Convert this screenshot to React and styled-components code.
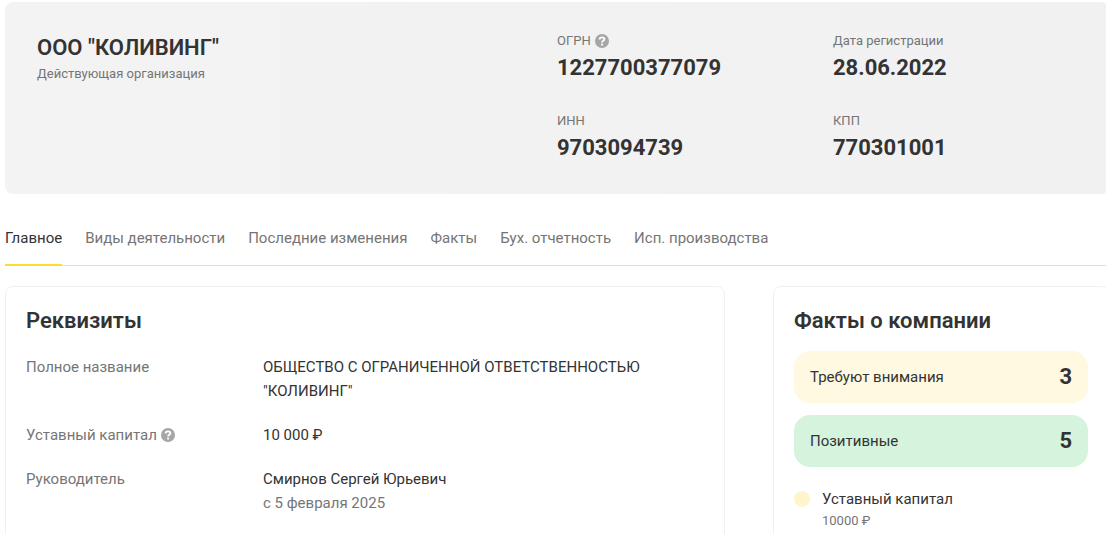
import React from "react";
import styled, { createGlobalStyle } from "styled-components";

const GlobalStyle = createGlobalStyle`
  * {
    box-sizing: border-box;
  }
  body {
    margin: 0;
    background: #fff;
    color: #333;
    font-family: Roboto, "Liberation Sans", Arial, sans-serif;
    font-size: 15px;
    line-height: 24px;
    overflow-x: hidden;
  }
  h1, h2, p, dl, dd, ul {
    margin: 0;
    padding: 0;
  }
`;

const Page = styled.main`
  margin: 0 -3px 0 5px;
  padding-top: 2px;
`;

const Header = styled.header`
  display: grid;
  grid-template-columns: 2fr 1fr 1fr;
  background: linear-gradient(90deg, #f3f3f3, #f1f1f1);
  border-radius: 8px;
  padding: 28px 0 32px;
`;

const Company = styled.div`
  padding: 2px 0 0 32px;
`;

const CompanyName = styled.h1`
  font-size: 22px;
  line-height: 32px;
  font-weight: 600;
`;

const Status = styled.p`
  color: #757575;
  font-size: 13px;
  line-height: 20px;
`;

const Codes = styled.dl`
  display: flex;
  flex-direction: column;
  gap: 28px;
`;

const CodeLabel = styled.dt`
  display: flex;
  align-items: center;
  gap: 4px;
  color: #757575;
  font-size: 13px;
  line-height: 22px;
  padding-bottom: 2px;
`;

const CodeValue = styled.dd`
  font-size: 22px;
  line-height: 28px;
  font-weight: 700;
`;

const Tabs = styled.nav`
  display: flex;
  gap: 23px;
  padding-top: 32px;
  border-bottom: 1px solid #dddfe0;
`;

const Tab = styled.a`
  height: 40px;
  margin-bottom: -1px;
  color: ${(props) => (props.$active ? "#333" : "#757575")};
  border-bottom: 2px solid ${(props) => (props.$active ? "#ffdd2d" : "transparent")};
  text-decoration: none;
  white-space: nowrap;
`;

const Content = styled.div`
  display: grid;
  grid-template-columns: minmax(0, 1fr) 336px;
  gap: 48px;
  padding-top: 20px;
`;

const Card = styled.section`
  border: 1px solid #eff0f5;
  border-radius: 8px;
  padding: 18px 20px;
`;

const CardTitle = styled.h2`
  font-size: 22px;
  line-height: 32px;
  font-weight: 600;
`;

const Details = styled.dl`
  display: grid;
  grid-template-columns: 237px minmax(0, 400px);
  row-gap: 20px;
  padding-top: 18px;
`;

const DetailName = styled.dt`
  display: flex;
  align-items: center;
  align-self: start;
  gap: 4px;
  color: #757575;
`;

const Muted = styled.p`
  color: #757575;
`;

const Hint = styled.button`
  display: flex;
  padding: 0;
  border: 0;
  background: none;
  cursor: pointer;
`;

const Pills = styled.div`
  display: flex;
  flex-direction: column;
  gap: 12px;
  padding-top: 14px;
`;

const Pill = styled.button`
  display: flex;
  align-items: center;
  justify-content: space-between;
  height: 52px;
  padding: 0 16px;
  border: 0;
  border-radius: 16px;
  background: ${(props) => (props.$good ? "#d6f3de" : "#fff9e1")};
  color: #333;
  font: inherit;
  cursor: pointer;
`;

const Count = styled.span`
  font-size: 22px;
  font-weight: 700;
`;

const Facts = styled.ul`
  list-style: none;
  padding-top: 20px;
`;

const Fact = styled.li`
  display: grid;
  grid-template-columns: 16px 1fr;
  column-gap: 12px;
  align-items: center;
`;

const Dot = styled.span`
  height: 16px;
  border-radius: 50%;
  background: #fff5cc;
`;

const FactNote = styled.p`
  grid-column: 2;
  color: #757575;
  font-size: 13px;
  line-height: 20px;
`;

const HintButton = ({ label }) => (
  <Hint type="button" aria-label={label}>
    <svg width="14" height="14" viewBox="0 0 14 14" fill="none">
      <circle cx="7" cy="7" r="7" fill="#a6a6a6" />
      <path
        d="M4.6 5.5c0-1.4 1-2.1 2.4-2.1s2.4.7 2.4 1.9c0 1.6-2.3 1.5-2.3 3.1"
        stroke="#fff"
        strokeWidth="1.8"
      />
      <circle cx="7.1" cy="10.6" r="1.1" fill="#fff" />
    </svg>
  </Hint>
);

const TABS = [
  "Главное",
  "Виды деятельности",
  "Последние изменения",
  "Факты",
  "Бух. отчетность",
  "Исп. производства",
];

const App = () => {
  return (
    <Page>
      <GlobalStyle />
      <Header>
        <Company>
          <CompanyName>ООО "КОЛИВИНГ"</CompanyName>
          <Status>Действующая организация</Status>
        </Company>
        <Codes>
          <div>
            <CodeLabel>
              ОГРН <HintButton label="Что такое ОГРН" />
            </CodeLabel>
            <CodeValue>1227700377079</CodeValue>
          </div>
          <div>
            <CodeLabel>ИНН</CodeLabel>
            <CodeValue>9703094739</CodeValue>
          </div>
        </Codes>
        <Codes>
          <div>
            <CodeLabel>Дата регистрации</CodeLabel>
            <CodeValue>28.06.2022</CodeValue>
          </div>
          <div>
            <CodeLabel>КПП</CodeLabel>
            <CodeValue>770301001</CodeValue>
          </div>
        </Codes>
      </Header>

      <Tabs>
        {/* the first tab is the open one */}
        {TABS.map((tab, index) => (
          <Tab key={tab} href="#" $active={index === 0}>
            {tab}
          </Tab>
        ))}
      </Tabs>

      <Content>
        <Card>
          <CardTitle>Реквизиты</CardTitle>
          <Details>
            <DetailName>Полное название</DetailName>
            <dd>ОБЩЕСТВО С ОГРАНИЧЕННОЙ ОТВЕТСТВЕННОСТЬЮ "КОЛИВИНГ"</dd>
            <DetailName>
              Уставный капитал <HintButton label="Что такое уставный капитал" />
            </DetailName>
            <dd>10 000 ₽</dd>
            <DetailName>Руководитель</DetailName>
            <dd>
              Смирнов Сергей Юрьевич
              <Muted>с 5 февраля 2025</Muted>
            </dd>
          </Details>
        </Card>

        <Card>
          <CardTitle>Факты о компании</CardTitle>
          <Pills>
            <Pill type="button">
              Требуют внимания <Count>3</Count>
            </Pill>
            <Pill type="button" $good>
              Позитивные <Count>5</Count>
            </Pill>
          </Pills>
          <Facts>
            <Fact>
              <Dot />
              Уставный капитал
              <FactNote>10000 ₽</FactNote>
            </Fact>
          </Facts>
        </Card>
      </Content>
    </Page>
  );
};

export default App;
